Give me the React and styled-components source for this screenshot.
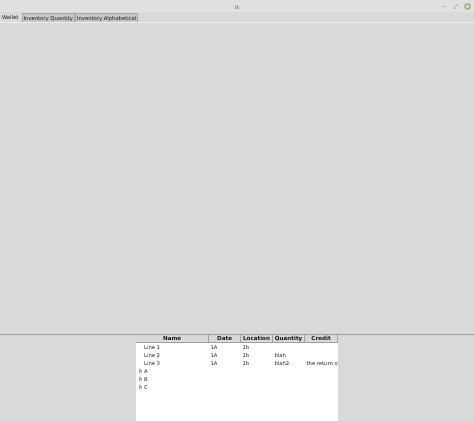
import { createGlobalStyle, styled } from "styled-components";

const tabs = ["Wallet", "Inventory Quantity", "Inventory Alphabetical"];
const columns = [
  { name: "Name", width: 73 },
  { name: "Date", width: 32 },
  { name: "Location", width: 32 },
  { name: "Quantity", width: 32 },
  { name: "Credit", width: 33 },
];
const rows = [
  { name: "Line 1", values: ["1A", "1b", "", ""] },
  { name: "Line 2", values: ["1A", "1b", "blah", ""] },
  { name: "Line 3", values: ["1A", "1b", "blah2", "the return of"] },
  { name: "A", branch: true, values: [] },
  { name: "B", branch: true, values: [] },
  { name: "C", branch: true, values: [] },
];

const GlobalStyle = createGlobalStyle`
  html, body {
    margin: 0;
    padding: 0;
    background: #d9d9d9;
  }
`;

function App() {
  return (
    <Page>
      <GlobalStyle />
      <TitleBar>
        <Title>tk</Title>
        <WindowButtons>
          <svg width="7" height="7" viewBox="0 0 7 7">
            <path d="M2 3.5h3" stroke="#a0a0a0" strokeWidth="0.8" />
          </svg>
          <svg width="7" height="7" viewBox="0 0 7 7">
            <path d="M2 5l3-3M3.5 1.6h2v2M1.6 3.5v2h2" stroke="#adadad" strokeWidth="0.7" fill="none" />
          </svg>
          <svg width="7" height="7" viewBox="0 0 7 7">
            <circle cx="3.5" cy="3.5" r="2.6" fill="#d3dcc6" stroke="#87ad5f" strokeWidth="1.2" />
          </svg>
        </WindowButtons>
      </TitleBar>
      <TabBar>
        {tabs.map((tab, i) => (
          <Tab key={tab} $active={i === 0}>
            {tab}
          </Tab>
        ))}
      </TabBar>
      <UpperPane />
      <Sash />
      <LowerPane>
        <Tree>
          <HeaderRow>
            {columns.map((col) => (
              <HeaderCell key={col.name} $width={col.width}>
                {col.name}
              </HeaderCell>
            ))}
          </HeaderRow>
          {rows.map((row) => (
            <Row key={row.name}>
              <NameCell $width={columns[0].width}>
                {row.branch && (
                  <Arrow width="4" height="6" viewBox="0 0 4 6">
                    <path d="M.6 1L3 3 .6 5z" fill="none" stroke="#666" strokeWidth="0.7" />
                  </Arrow>
                )}
                <NameText>{row.name}</NameText>
              </NameCell>
              {row.values.map((value, i) => (
                <Cell key={i} $width={columns[i + 1].width}>
                  {value}
                </Cell>
              ))}
            </Row>
          ))}
        </Tree>
      </LowerPane>
    </Page>
  );
}

export default App;

// styled-components
const Page = styled.div`
  display: flex;
  flex-direction: column;
  width: 474px;
  height: 421px;
  overflow: hidden;
  background: #d9d9d9;
  font-family: "DejaVu Sans", sans-serif;
  font-size: 5.25px;
  color: #222222;
  filter: blur(0.25px);
`;

const TitleBar = styled.div`
  position: relative;
  flex: none;
  display: flex;
  align-items: center;
  justify-content: center;
  height: 12px;
  padding-top: 1px;
  box-sizing: border-box;
  background: #e0e0e0;
`;

const Title = styled.span`
  color: #6e6e6e;
`;

const WindowButtons = styled.div`
  position: absolute;
  top: 3px;
  right: 3px;
  display: flex;
  gap: 5px;
`;

const TabBar = styled.div`
  flex: none;
  display: flex;
  align-items: flex-end;
  height: 10px;
  border-bottom: 1px solid #eeeeee;
`;

const Tab = styled.div`
  height: ${(props) => (props.$active ? "10px" : "9px")};
  width: ${(props) => (props.$active ? "21.5px" : "auto")};
  padding: ${(props) => (props.$active ? "0 0 0 2px" : "0 1px")};
  line-height: ${(props) => (props.$active ? "10px" : "8px")};
  white-space: nowrap;
  background: ${(props) => (props.$active ? "#d9d9d9" : "#c6c6c6")};
  border: ${(props) => (props.$active ? "none" : "1px solid #a8a8a8")};
  border-bottom: none;
  box-sizing: border-box;
  color: #111111;
`;

const UpperPane = styled.div`
  flex: 1;
`;

const Sash = styled.div`
  flex: none;
  height: 1px;
  background: #9c9c9c;
`;

const LowerPane = styled.div`
  flex: none;
  display: flex;
  justify-content: center;
  height: 86px;
`;

const Tree = styled.div`
  width: 202px;
  background: #ffffff;
`;

const HeaderRow = styled.div`
  display: flex;
  height: 8px;
  background: #d9d9d9;
`;

const HeaderCell = styled.div`
  width: ${(props) => props.$width}px;
  box-sizing: border-box;
  border-right: 1px solid #a0a0a0;
  border-bottom: 1px solid #a0a0a0;
  text-align: center;
  line-height: 7px;
  font-size: 5.6px;
  font-weight: 700;
  color: #111;
  white-space: nowrap;
  overflow: hidden;
`;

const Row = styled.div`
  display: flex;
  height: 8px;
  line-height: 8px;
`;

const NameCell = styled.div`
  position: relative;
  width: ${(props) => props.$width}px;
`;

const Arrow = styled.svg`
  position: absolute;
  top: 1px;
  left: 3px;
`;

const NameText = styled.span`
  margin-left: 8px;
`;

const Cell = styled.div`
  width: ${(props) => props.$width}px;
  box-sizing: border-box;
  padding-left: 1.5px;
  white-space: nowrap;
  overflow: hidden;
`;
